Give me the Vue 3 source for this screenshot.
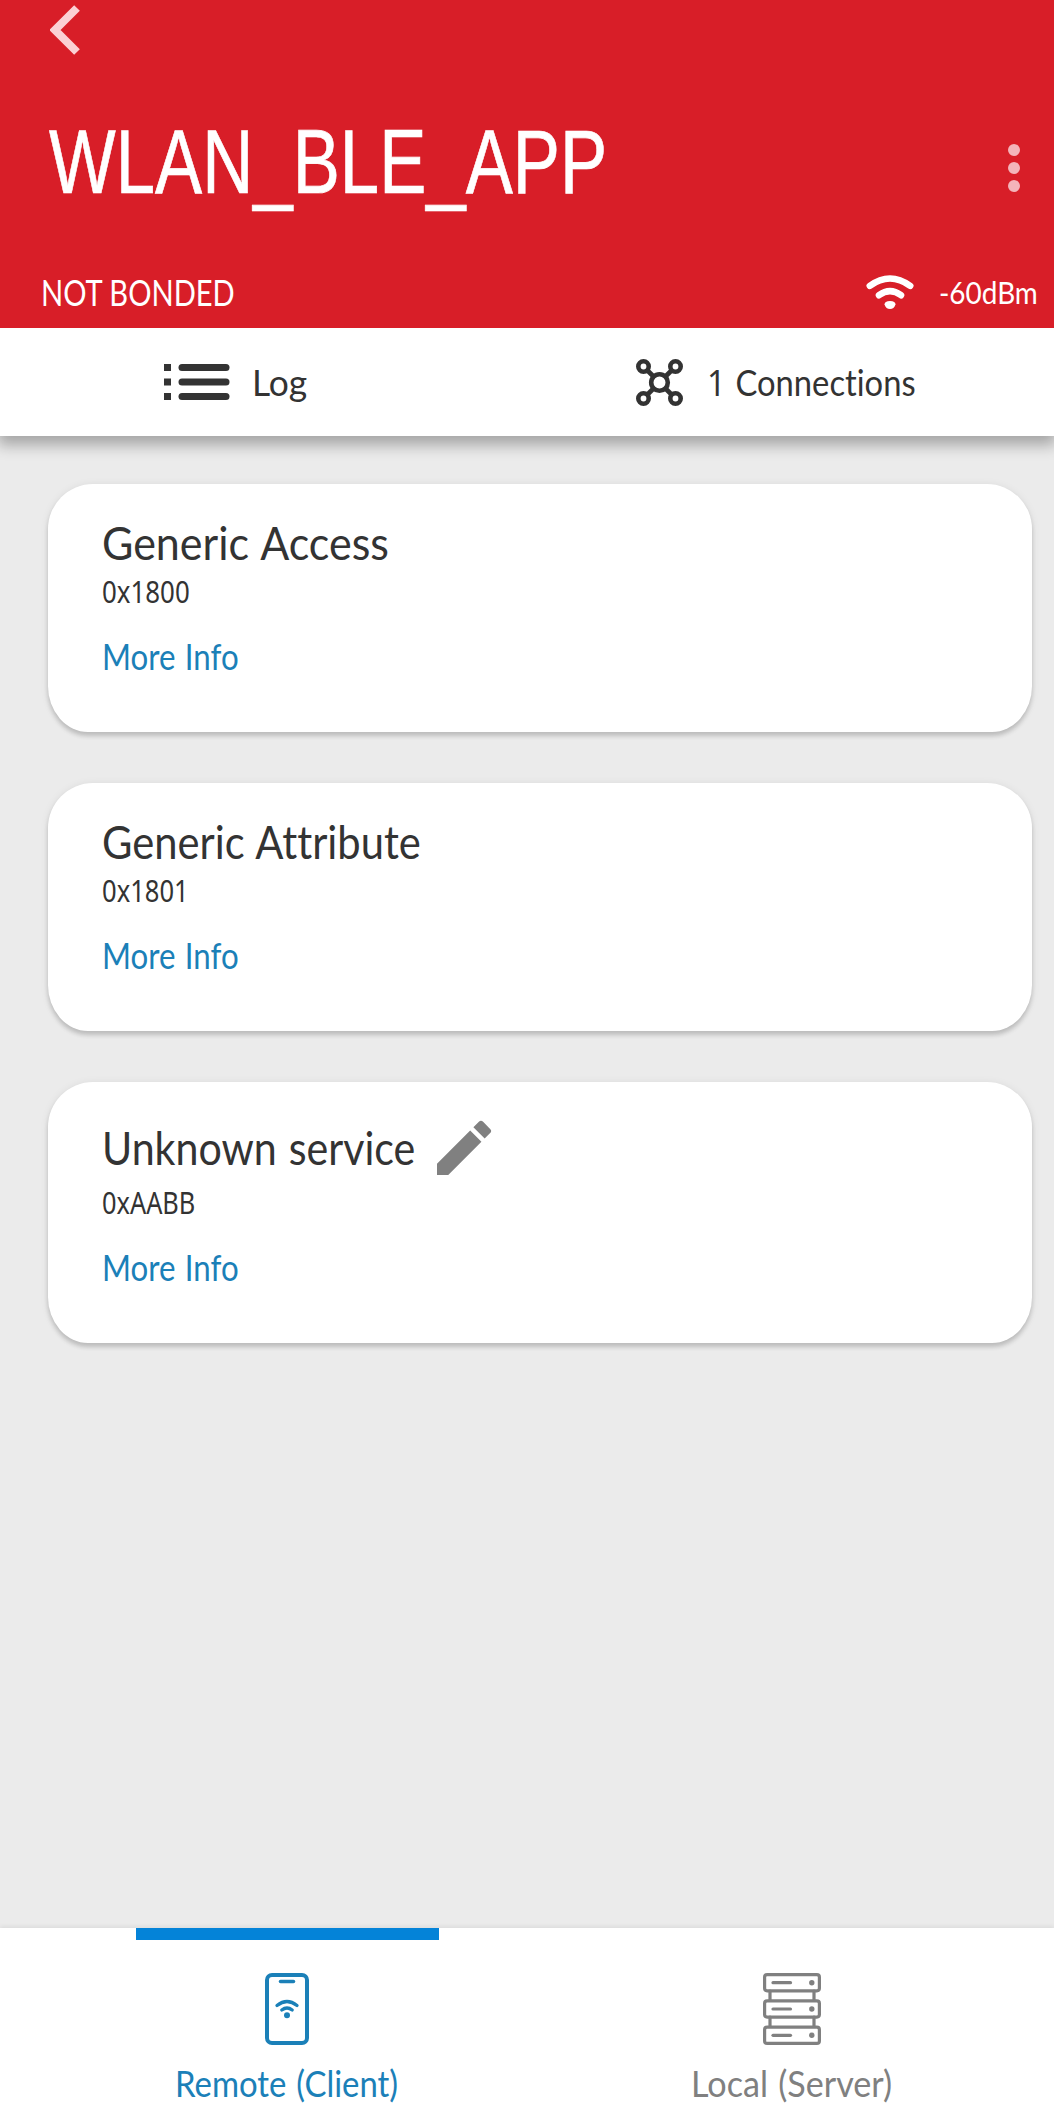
<script setup>
const services = [
  { name: 'Generic Access', nameWidth: 287, code: '0x1800', codeWidth: 88 },
  { name: 'Generic Attribute', nameWidth: 319, code: '0x1801', codeWidth: 87 },
  { name: 'Unknown service', nameWidth: 313, code: '0xAABB', codeWidth: 93, editable: true }
]

// Condenses a label horizontally so that it takes exactly the given width.
const vFit = {
  mounted(el, { value }) {
    const natural = el.offsetWidth
    el.style.transform = `scaleX(${value / natural})`
    el.style.marginRight = `${value - natural}px`
  }
}
</script>

<template>
  <div class="app">
    <header class="header">
      <svg class="back" width="34" height="52" viewBox="0 0 34 52">
        <path d="M27 5 5 27 27 49" fill="none" stroke="#fbd0d4" stroke-width="8" />
      </svg>
      <div class="title-row">
        <h1 v-fit="558" class="fit">WLAN_BLE_APP</h1>
        <svg class="dots" width="12" height="48" viewBox="0 0 12 48" fill="#f4b4ba">
          <circle cx="6" cy="6" r="6" /><circle cx="6" cy="24" r="6" /><circle cx="6" cy="42" r="6" />
        </svg>
      </div>
      <div class="status">
        <span v-fit="194" class="fit bond">NOT BONDED</span>
        <div class="signal">
          <svg width="48" height="34" viewBox="0 0 48 34">
            <path d="M3.8 10.8Q24-3.8 44.2 10.8M13 20.2Q24 12 35 20.2" fill="none" stroke="#fff" stroke-width="6.6" stroke-linecap="round" />
            <path d="M18.5 29.5Q18.500 26 24 26T29.500 29.500Q28 34 24 34T18.500 29.500Z" fill="#fff" />
          </svg>
          <span v-fit="99" class="fit dbm">-60dBm</span>
        </div>
      </div>
    </header>

    <div class="tools">
      <div class="tool log">
        <svg width="66" height="36" viewBox="0 0 66 36" fill="#333">
          <path d="M0 0h7v7H0zM0 14.500h7v7H0zM0 29h7v7H0z" />
          <rect x="14.500" y="0" width="51" height="7" rx="3.500" />
          <rect x="14.500" y="14.500" width="51" height="7" rx="3.500" />
          <rect x="14.500" y="29" width="51" height="7" rx="3.500" />
        </svg>
        <span v-fit="55" class="fit">Log</span>
      </div>
      <div class="tool connections">
        <svg width="47" height="47" viewBox="0 0 47 47" stroke="#333" stroke-width="4.600">
          <path d="M7.500 7.500l32 32M39.500 7.500l-32 32" />
          <g fill="#fff">
            <circle cx="23.500" cy="23.500" r="8.300" />
            <circle cx="7.500" cy="7.500" r="5.200" />
            <circle cx="39.500" cy="7.500" r="5.200" />
            <circle cx="7.500" cy="39.500" r="5.200" />
            <circle cx="39.500" cy="39.500" r="5.200" />
          </g>
        </svg>
        <span v-fit="209" class="fit"><span class="digit">1</span> Connections</span>
      </div>
    </div>

    <main class="services">
      <section v-for="s in services" :key="s.code" class="card">
        <div class="name-row" :class="{ editable: s.editable }">
          <h2 v-fit="s.nameWidth" class="fit">{{ s.name }}</h2>
          <svg v-if="s.editable" class="pencil" width="72" height="72" viewBox="0 0 24 24" fill="#808080">
            <path d="M3 17.250V21h3.750L17.810 9.940l-3.750-3.750L3 17.250zM20.710 7.040a1 1 0 0 0 0-1.410l-2.340-2.340a1 1 0 0 0-1.410 0l-1.830 1.830 3.750 3.750 1.830-1.830z" />
          </svg>
        </div>
        <div class="code"><span v-fit="s.codeWidth" class="fit">{{ s.code }}</span></div>
        <div class="more"><span v-fit="137" class="fit">More Info</span></div>
      </section>
    </main>

    <nav class="tabs">
      <div class="tab active">
        <svg width="44" height="72" viewBox="0 0 44 72" fill="none" stroke="#1b80b8" stroke-linecap="round">
          <rect x="2" y="2" width="40" height="68" rx="5" stroke-width="4" />
          <path d="M15.500 8.500h13" stroke-width="3.500" />
          <path d="M12 32.500q10-8 20 0M16.800 37q5.200-4 10.400 0" stroke-width="3.300" />
          <circle cx="22" cy="42.300" r="3" fill="#1b80b8" stroke="none" />
        </svg>
        <span v-fit="223" class="fit">Remote (Client)</span>
      </div>
      <div class="tab">
        <svg width="58" height="72" viewBox="0 0 58 72" fill="none" stroke="#808080" stroke-width="3.200" stroke-linecap="round">
          <path d="M7 18v9M51 18v9M7 44v9M51 44v9" />
          <g v-for="y in [0, 26.3, 52.6]" :key="y" :transform="`translate(0 ${y})`">
            <rect x="1.600" y="1.600" width="54.800" height="16.200" rx="2.500" />
            <path d="M10 9.700h17.500" />
            <circle cx="48.800" cy="9.700" r="2.700" fill="#808080" stroke="none" />
          </g>
        </svg>
        <span v-fit="201" class="fit">Local (Server)</span>
      </div>
    </nav>
  </div>
</template>

<style>
body {
  margin: 0;
  background: #ebebeb;
}
</style>

<style scoped>
.app {
  display: flex;
  flex-direction: column;
  width: 1054px;
  height: 2115px;
  overflow: hidden;
  background: #ebebeb;
  color: #333;
  font-family: Lato, "Noto Sans", sans-serif;
  font-variant-ligatures: none;
  word-spacing: 0.1em;
}
svg {
  display: block;
  flex: none;
}
h1, h2 {
  margin: 0;
  font-weight: 400;
}
.fit {
  display: inline-block;
  white-space: nowrap;
  transform-origin: 0 50%;
}
.header {
  position: relative;
  z-index: 1;
  box-sizing: border-box;
  height: 328px;
  padding-top: 3px;
  background: #d81e28;
  color: #fff;
}
.back {
  margin-left: 50px;
}
.title-row {
  display: flex;
  justify-content: space-between;
  align-items: center;
  height: 100px;
  margin-top: 54px;
  padding: 0 34px 0 49px;
}
h1 {
  padding-top: 3px;
  font: 400 91.5px/100px "Liberation Sans", Arial, sans-serif;
  -webkit-text-stroke: 0.7px #fff;
}
.dots {
  margin-top: 18px;
}
.status {
  display: flex;
  justify-content: space-between;
  align-items: center;
  margin-top: 60px;
  padding: 0 16px 0 41px;
  line-height: 44px;
}
.bond {
  font-size: 36px;
  word-spacing: 0;
}
.signal {
  display: flex;
  align-items: center;
  gap: 25px;
}
.dbm {
  padding-top: 1px;
  font-size: 31px;
}
.tools {
  display: flex;
  height: 108px;
  background: #fff;
  box-shadow: 0 7px 14px 2px rgba(0, 0, 0, 0.3);
  font-size: 36px;
  line-height: 44px;
}
.tool {
  display: flex;
  align-items: center;
  box-sizing: border-box;
  width: 50%;
}
.log {
  gap: 22px;
  padding-left: 164px;
}
.connections {
  gap: 24px;
  padding-left: 109px;
}
.digit {
  font-family: "Noto Sans", sans-serif;
}
.services {
  display: flex;
  flex: 1;
  flex-direction: column;
  gap: 51px;
  padding: 48px 22px 0 48px;
}
.card {
  box-sizing: border-box;
  height: 248px;
  padding: 31px 0 0 54px;
  border-radius: 45px 45px 40px 40px / 45px 45px 46px 46px;
  background: #fff;
  box-shadow: 0 4px 4px rgba(0, 0, 0, 0.16), 0 1px 8px rgba(0, 0, 0, 0.08);
}
.card:last-child {
  height: 261px;
}
.name-row {
  display: flex;
  align-items: center;
  height: 56px;
}
.name-row.editable {
  height: 69px;
}
h2 {
  font-size: 46px;
  line-height: 56px;
}
.pencil {
  margin: 1px 0 0 13px;
}
.code {
  height: 36px;
  margin-top: 3px;
  font: 30px/36px "Noto Sans", sans-serif;
}
.more {
  margin-top: 24px;
  color: #1b80b8;
  font-size: 36px;
  line-height: 44px;
}
.tabs {
  display: flex;
  box-sizing: border-box;
  height: 187px;
  padding: 0 110px 0 136px;
  justify-content: space-between;
  background: #fff;
  box-shadow: 0 -2px 4px rgba(0, 0, 0, 0.06);
  font-size: 36px;
  line-height: 44px;
}
.tab {
  display: flex;
  flex-direction: column;
  align-items: center;
  box-sizing: border-box;
  width: 303px;
  padding: 33px 1px 0 0;
  border-top: 12px solid transparent;
  color: #808080;
}
.tab.active {
  border-top-color: #0483d8;
  color: #1b80b8;
}
.tab .fit {
  margin-top: 16px;
}
</style>
